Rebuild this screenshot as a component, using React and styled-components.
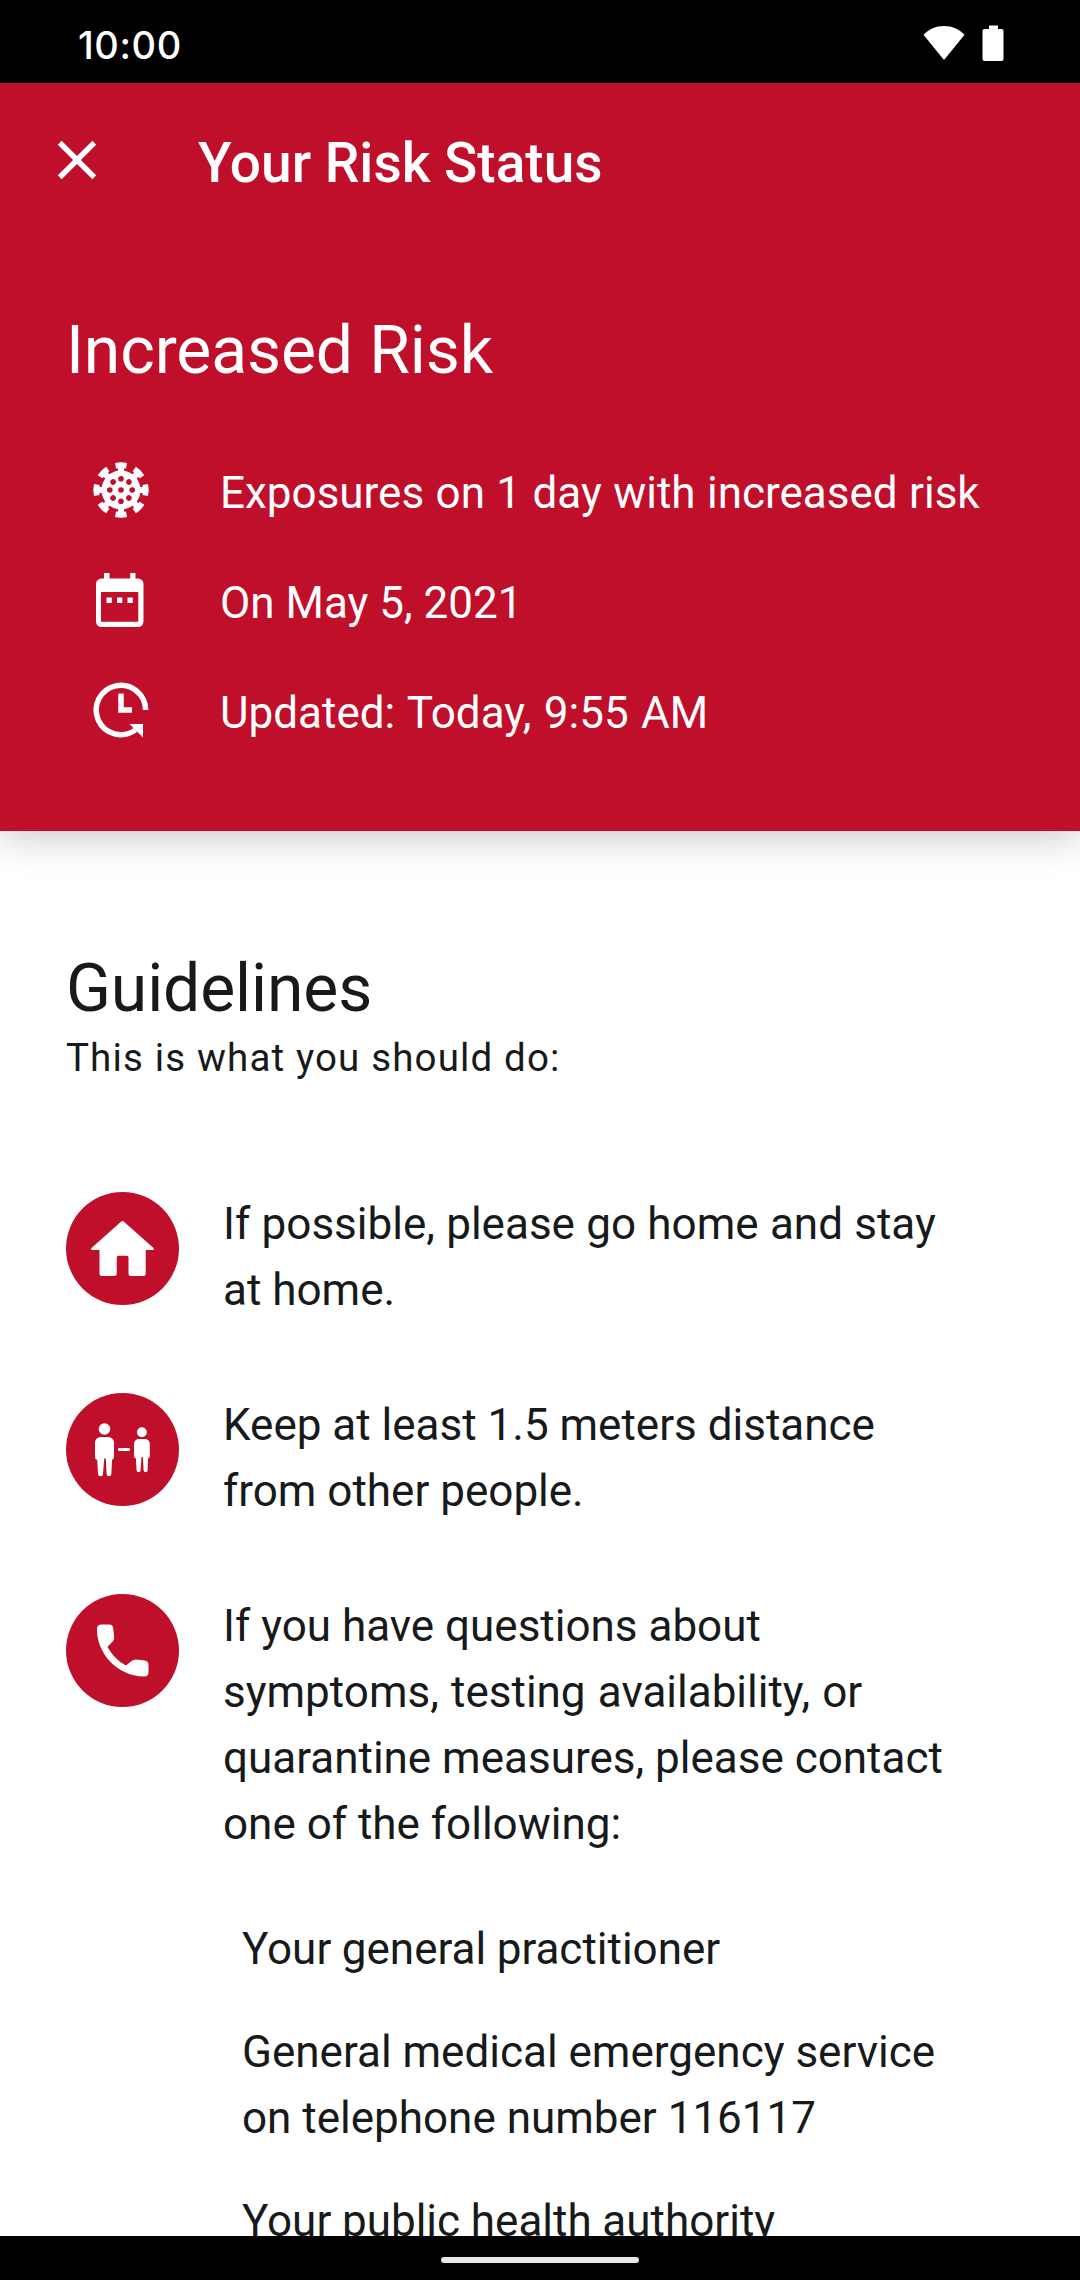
import React from "react";
import styled, { createGlobalStyle } from "styled-components";

const RED = "#c00f2a";
const INK = "#17191a";

const GlobalStyle = createGlobalStyle`
  *, *::before, *::after { box-sizing: border-box; }
  body { margin: 0; background: #fff; }
`;

const Screen = styled.div`
  display: flex;
  flex-direction: column;
  width: 1080px;
  height: 2280px;
  overflow: hidden;
  background: #fff;
  color: ${INK};
  font-family: Roboto, "Liberation Sans", sans-serif;
`;

const StatusBar = styled.header`
  display: flex;
  flex: none;
  align-items: center;
  justify-content: space-between;
  height: 83px;
  padding: 3px 76px 0 78px;
  background: #000;
  color: #fff;
`;

const Clock = styled.time`
  padding-top: 4px;
  font: 500 38px/44px Inter, Roboto, sans-serif;
  letter-spacing: 0.6px;
`;

const StatusIcons = styled.div`
  display: flex;
  align-items: center;
  gap: 17px;
`;

const RiskHeader = styled.section`
  position: relative;
  flex: none;
  height: 748px;
  background: ${RED};
  color: #fff;
  box-shadow: 0 8px 36px rgba(0, 0, 0, 0.2);
`;

const Toolbar = styled.div`
  display: flex;
  align-items: center;
  gap: 88px;
  height: 154px;
  padding-left: 44px;
`;

const ToolbarTitle = styled.h1`
  margin: 5px 0 0;
  font-size: 55px;
  font-weight: 500;
  line-height: 66px;
`;

const IconButton = styled.button`
  display: flex;
  padding: 0;
  border: 0;
  background: none;
  color: inherit;
`;

const Headline = styled.h2`
  margin: 0;
  font-size: 66px;
  font-weight: 400;
  line-height: 78px;
  letter-spacing: -0.1px;
`;

const RiskContent = styled.div`
  padding: 75px 66px 0;
`;

const FactList = styled.ul`
  display: flex;
  flex-direction: column;
  gap: 44px;
  margin: 67px 0 0;
  padding: 0 0 0 22px;
  list-style: none;
`;

const Fact = styled.li`
  display: flex;
  align-items: center;
  gap: 66px;
  height: 66px;
`;

const FactText = styled.span`
  padding-top: 6px;
  font-size: 44px;
  line-height: 60px;
  white-space: nowrap;
  word-spacing: ${({ $space = 0 }) => $space}px;
`;

const Guidelines = styled.main`
  flex: 1;
  min-height: 0;
  overflow: hidden;
  padding: 119px 66px 0;
`;

const Subtitle = styled.p`
  margin: 4px 0 0;
  font-size: 38.5px;
  line-height: 52px;
  letter-spacing: 1.15px;
`;

const GuidelineList = styled.ul`
  display: flex;
  flex-direction: column;
  gap: 69px;
  margin: 107px 0 0;
  padding: 0;
  list-style: none;
`;

const Guideline = styled.li`
  display: flex;
  align-items: flex-start;
  gap: 44px;
`;

const Badge = styled.span`
  display: flex;
  flex: none;
  margin-top: 1px;
  width: 113px;
  height: 113px;
  border-radius: 50%;
  background: ${RED};
`;

const Body = styled.div`
  font-size: 44px;
  line-height: 66px;
`;

const Line = styled.span`
  display: block;
  white-space: nowrap;
  word-spacing: ${({ $space = 0 }) => $space}px;
`;

const ContactList = styled.ul`
  display: flex;
  flex-direction: column;
  gap: 37px;
  margin: 59px 0 0;
  padding: 0 0 0 19px;
  list-style: none;
`;

const Contact = styled.li`
  line-height: 66px;
`;

const NavigationBar = styled.footer`
  display: flex;
  flex: none;
  justify-content: center;
  height: 44px;
  padding-top: 21px;
  background: #000;
`;

const HomeHandle = styled.span`
  width: 198px;
  height: 6px;
  border-radius: 3px;
  background: #e8e8e8;
`;

const WifiIcon = () => (
  <svg width="42" height="36" viewBox="0 0 42 36" fill="currentColor">
    <path d="M21 35 .5 9.8C6 4 13 1 21 1s15 3 20.500 8.800Z" />
  </svg>
);

const BatteryIcon = () => (
  <svg width="22" height="36" viewBox="0 0 22 36" fill="currentColor">
    <path d="M7 .5h9V4h3.500A2 2 0 0 1 21.500 6v28a2 2 0 0 1-2 2h-17a2 2 0 0 1-2-2V6a2 2 0 0 1 2-2H7Z" />
  </svg>
);

const CloseIcon = () => (
  <svg width="66" height="66" viewBox="0 0 24 24" fill="currentColor">
    <path d="M19 6.410 17.590 5 12 10.590 6.410 5 5 6.410 10.590 12 5 17.590 6.410 19 12 13.410 17.590 19 19 17.590 13.410 12Z" />
  </svg>
);

const VirusIcon = () => (
  <svg width="66" height="66" viewBox="-33 -33 66 66" fill="#fff">
    <circle r="19.500" />
    {[0, 45, 90, 135, 180, 225, 270, 315].map((angle) => (
      <path
        key={angle}
        transform={`rotate(${angle})`}
        d="M-6-27Q0-28.500 6-27L5-21.500H3V-17H-3V-21.500H-5Z"
      />
    ))}
    <g fill={RED}>
      <circle r="2.800" />
      {[0, 45, 90, 135, 180, 225, 270, 315].map((angle) => (
        <circle key={angle} cy="-11.200" r="2.800" transform={`rotate(${angle})`} />
      ))}
    </g>
  </svg>
);

const CalendarIcon = () => (
  <svg width="66" height="66" viewBox="0 0 66 66">
    <path
      fill="#fff"
      fillRule="evenodd"
      d="M16 6h5.500v5.500h20.700V6h5.300v5.500h2.500a5.500 5.500 0 0 1 5.500 5.500v37.500a5.500 5.500 0 0 1-5.500 5.500H13.500A5.500 5.500 0 0 1 8 54.500V17a5.500 5.500 0 0 1 5.500-5.500H16ZM13 25v29.700h37.300V25ZM18.500 30.500h5.300v5.500h-5.300ZM29 30.500h5.300v5.500H29ZM39.500 30.500h5.300v5.500h-5.300Z"
    />
  </svg>
);

const UpdateIcon = () => (
  <svg width="66" height="66" viewBox="0 0 66 66" fill="none" stroke="#fff">
    <path strokeWidth="5.500" d="M57.600 33A24.700 24.700 0 1 0 47.500 52.900" />
    <path strokeWidth="5.500" d="M33 16.500V33H44" />
    <path fill="#fff" stroke="none" d="M41.500 47H55V60.500Z" />
  </svg>
);

const BadgeGlyph = ({ children }) => (
  <svg width="113" height="113" viewBox="0 0 113 113" fill="#fff">
    {children}
  </svg>
);

const HomeGlyph = () => (
  <BadgeGlyph>
    <path d="M55.300 29.400Q56.500 28.500 57.700 29.400L87.500 56Q88.500 58 86.500 58H79.700V81.500Q79.700 84 77.200 84H65Q62.500 84 62.500 81.500V65.500Q62.500 63.700 60.700 63.700H52.300Q50.700 63.700 50.700 65.500V81.500Q50.700 84 48.200 84H36Q33.500 84 33.500 81.500V58H26.500Q24.500 58 25.500 56Z" />
  </BadgeGlyph>
);

const DistanceGlyph = () => (
  <BadgeGlyph>
    <circle cx="38.500" cy="36" r="5.800" />
    <path d="M35.200 44h6.600q6.200 0 6.200 6.500v13.500q0 2.700-2 2.700l-.6 14q0 2.500-2.400 2.500t-2.400-2.500L39.800 65.500h-1.600L37 80.700q0 2.500-2.400 2.500T32 80.700l-.8-14q-2.200 0-2.200-2.700V50.500q0-6.500 6.200-6.500Z" />
    <rect x="52" y="55" width="12" height="3" rx="1.200" />
    <circle cx="75.900" cy="39.200" r="4.900" />
    <path d="M73.200 46h5.400q5.200 0 5.200 5.500v11.500q0 2.300-1.700 2.300l-.5 12q0 2-2 2t-2-2L76.900 64h-1.400l-.9 13.300q0 2-2 2t-2-2l-.7-12q-1.900 0-1.900-2.300V51.500q0-5.500 5.200-5.500Z" />
  </BadgeGlyph>
);

const PhoneGlyph = () => (
  <BadgeGlyph>
    <path d="M36 30.600H43.500Q46.500 30.600 47.200 34L48.200 43.500Q48.200 46 46.700 47.500L41.500 52.700C46 61 52 67 60 71.500L65.500 67Q67.500 65.500 70 65.500L79 66.500Q82.500 67.500 82.500 70.500V78Q82.500 82.500 78 82.500C50 82 30.500 58 31 35Q31 30.600 36 30.600Z" />
  </BadgeGlyph>
);

const facts = [
  { icon: <VirusIcon />, text: "Exposures on 1 day with increased risk", space: 0.5 },
  { icon: <CalendarIcon />, text: "On May 5, 2021" },
  { icon: <UpdateIcon />, text: "Updated: Today, 9:55 AM", space: 1.4 },
];

const guidelines = [
  {
    icon: <HomeGlyph />,
    lines: [{ text: "If possible, please go home and stay", space: 0.4 }, { text: "at home." }],
  },
  {
    icon: <DistanceGlyph />,
    lines: [{ text: "Keep at least 1.5 meters distance" }, { text: "from other people." }],
  },
  {
    icon: <PhoneGlyph />,
    lines: [
      { text: "If you have questions about" },
      { text: "symptoms, testing availability, or", space: 1.3 },
      { text: "quarantine measures, please contact" },
      { text: "one of the following:" },
    ],
    contacts: [
      [{ text: "Your general practitioner", space: -0.4 }],
      [{ text: "General medical emergency service" }, { text: "on telephone number 116117" }],
      [{ text: "Your public health authority", space: -0.2 }],
    ],
  },
];

const Lines = ({ lines }) =>
  lines.map(({ text, space }) => (
    <Line key={text} $space={space}>
      {text}
    </Line>
  ));

export default function App() {
  return (
    <Screen>
      <GlobalStyle />
      <StatusBar>
        <Clock>10:00</Clock>
        <StatusIcons>
          <WifiIcon />
          <BatteryIcon />
        </StatusIcons>
      </StatusBar>
      <RiskHeader>
        <Toolbar>
          <IconButton aria-label="Close">
            <CloseIcon />
          </IconButton>
          <ToolbarTitle>Your Risk Status</ToolbarTitle>
        </Toolbar>
        <RiskContent>
          <Headline>Increased Risk</Headline>
          <FactList>
            {facts.map(({ icon, text, space }) => (
              <Fact key={text}>
                {icon}
                <FactText $space={space}>{text}</FactText>
              </Fact>
            ))}
          </FactList>
        </RiskContent>
      </RiskHeader>
      <Guidelines>
        <Headline>Guidelines</Headline>
        <Subtitle>This is what you should do:</Subtitle>
        <GuidelineList>
          {guidelines.map(({ icon, lines, contacts }) => (
            <Guideline key={lines[0].text}>
              <Badge>{icon}</Badge>
              <Body>
                <Lines lines={lines} />
                {contacts && (
                  <ContactList>
                    {contacts.map((contact) => (
                      <Contact key={contact[0].text}>
                        <Lines lines={contact} />
                      </Contact>
                    ))}
                  </ContactList>
                )}
              </Body>
            </Guideline>
          ))}
        </GuidelineList>
      </Guidelines>
      <NavigationBar>
        <HomeHandle />
      </NavigationBar>
    </Screen>
  );
}
